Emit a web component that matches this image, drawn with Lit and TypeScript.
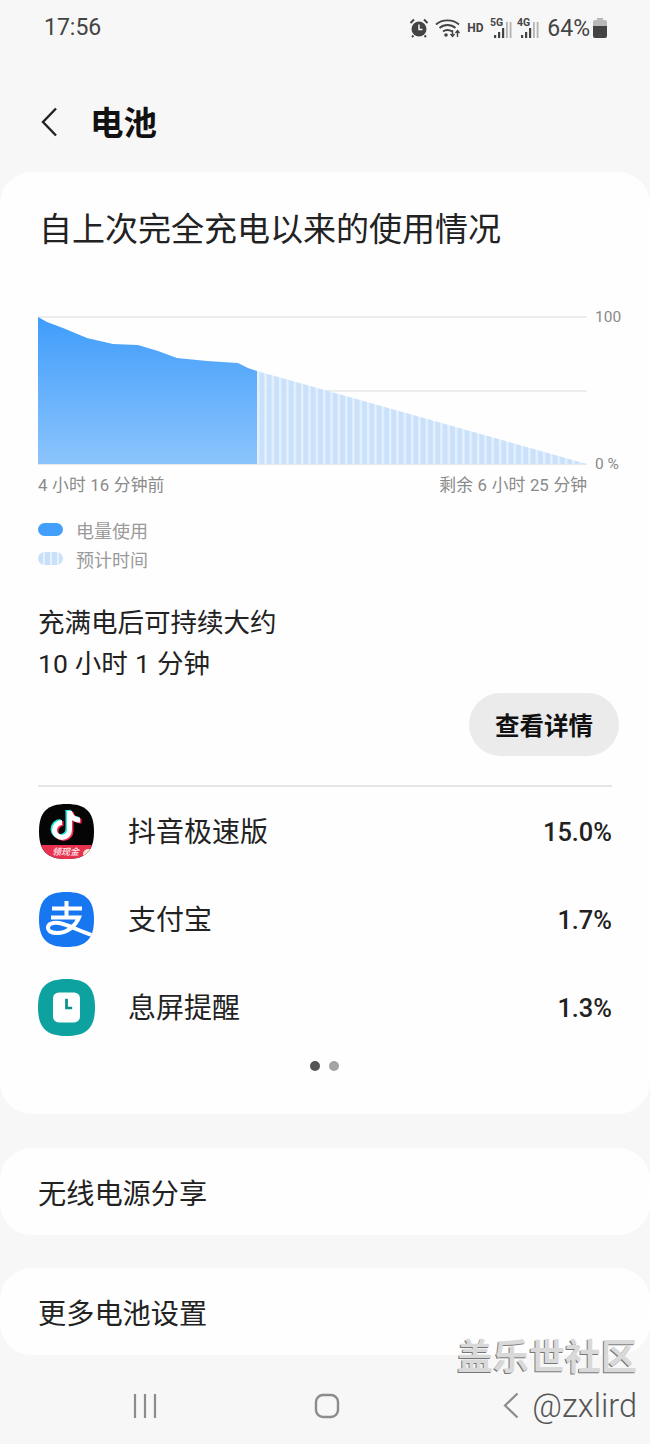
import { LitElement, css, html, svg } from 'lit'
import { customElement } from 'lit/decorators.js'

const usedLine =
  'M0 12 L9 17 L25 23 L49 33 L75 39 L100 40 L120 46 L139 53 L169 56 L200 58 L210 63 L219 66'

const signal = (label: string) => html`
  <svg class="signal" width="22" height="24" viewBox="0 0 22 24">
    <text x="0" y="9.5" font-family="Roboto" font-size="10.5" font-weight="700" fill="#444">${label}</text>
    <rect x="4" y="19" width="2.2" height="3" fill="#444" />
    <rect x="8" y="16" width="2.2" height="6" fill="#444" />
    <rect x="12" y="12" width="2.2" height="10" fill="#444" />
    <rect x="16" y="6" width="1.8" height="16" fill="#b4b4b4" />
    <rect x="19.7" y="6" width="1.8" height="16" fill="#b4b4b4" />
  </svg>
`

const apps = [
  { name: '抖音极速版', value: '15.0%', icon: 'douyin' },
  { name: '支付宝', value: '1.7%', icon: 'alipay' },
  { name: '息屏提醒', value: '1.3%', icon: 'clock' },
]

const squircle = 'M27.5 0 C47 0 55 8 55 27.5 C55 47 47 55 27.5 55 C8 55 0 47 0 27.5 C0 8 8 0 27.5 0 Z'

const icons: Record<string, unknown> = {
  douyin: html`<svg width="55" height="55" viewBox="0 0 55 55">
    <defs><clipPath id="dy"><path d=${squircle} /></clipPath></defs>
    <g clip-path="url(#dy)">
      <rect width="55" height="55" fill="#050505" />
      <rect y="41" width="55" height="14" fill="#e8304f" />
      <text x="13" y="51" font-family="Noto Sans CJK SC" font-size="9" font-weight="700" font-style="italic" fill="#fbd9de">领现金</text>
      <circle cx="49" cy="50" r="5" fill="#f6e2cf" />
      ${svg`<g fill="none" stroke-width="5">
        <path d="M30.5 7 V26 A7.5 7.5 0 1 1 23 18.5" stroke="#25e8e2" transform="translate(-1.5 -1)" />
        <path d="M30.5 7 C31 12 35 16 41 16" stroke="#25e8e2" transform="translate(-1.5 -1)" />
        <path d="M30.5 7 V26 A7.5 7.5 0 1 1 23 18.5" stroke="#fd2c55" transform="translate(1.5 1)" />
        <path d="M30.5 7 C31 12 35 16 41 16" stroke="#fd2c55" transform="translate(1.5 1)" />
        <path d="M30.5 7 V26 A7.5 7.5 0 1 1 23 18.5" stroke="#fff" />
        <path d="M30.5 7 C31 12 35 16 41 16" stroke="#fff" />
      </g>`}
    </g>
  </svg>`,
  alipay: html`<svg width="55" height="55" viewBox="0 0 55 55">
    <defs><clipPath id="ap"><path d=${squircle} /></clipPath></defs>
    <g clip-path="url(#ap)">
      <rect width="55" height="55" fill="#1677f0" />
      <g fill="none" stroke="#fff" stroke-width="4">
        <path d="M13 16.5 H43" />
        <path d="M27.5 9 V26" />
        <path d="M12 25.5 H40 C37 33 29 41 18 41 C11 41 8.5 38 9 35 C10 30.5 17 30 24 32 C34 35 45 41 56 44" />
      </g>
    </g>
  </svg>`,
  clock: html`<svg width="57" height="57" viewBox="0 0 55 55">
    <path d=${squircle} fill="#0da19f" />
    <rect x="14.5" y="13" width="26" height="29" rx="5.5" fill="#fff" />
    <path d="M27.5 19 V28 H33" fill="none" stroke="#0a8f8c" stroke-width="2.6" />
  </svg>`,
}

@customElement('app-root')
export class AppRoot extends LitElement {
  static styles = css`
    :host {
      display: block;
      position: relative;
      width: 650px;
      height: 1444px;
      overflow: hidden;
      background: #f7f7f7;
      color: #111;
      font-family: Roboto, 'Noto Sans CJK SC', sans-serif;
    }

    .status {
      height: 56px;
      display: flex;
      align-items: center;
      padding: 0 43px 0 44px;
      color: #444;
    }

    .time {
      font-size: 23px;
      line-height: 56px;
      flex: 1;
    }

    .status-icons {
      display: flex;
      align-items: center;
    }

    .alarm {
      margin-right: 6px;
    }

    .hd {
      font-size: 12px;
      font-weight: 700;
      width: 17px;
      margin: 0 6px;
    }

    .signal {
      margin-right: 5px;
    }

    .pct {
      font-size: 23px;
      margin: 0 3px 0 3px;
    }

    .header {
      height: 116px;
      box-sizing: border-box;
      padding: 48px 0 0 38px;
      display: flex;
      align-items: flex-start;
    }

    .back {
      margin: 3px 33px 0 3px;
    }

    .header h1 {
      margin: 0;
      font-size: 33.5px;
      font-weight: 700;
      line-height: 40px;
    }

    .card {
      background: #fefefe;
      border-radius: 32px;
    }

    .usage {
      height: 942px;
      box-sizing: border-box;
      padding: 38px 31px 0 38px;
    }

    .usage h2 {
      margin: 0 0 55px 1px;
      font-size: 33px;
      font-weight: 400;
      line-height: 40px;
      color: #222;
    }

    .chart {
      display: block;
      overflow: visible;
    }

    .axis {
      display: flex;
      justify-content: space-between;
      width: 549px;
      padding-top: 1px;
      font-size: 16.8px;
      word-spacing: 0.5px;
      line-height: 20px;
      color: #8a8a8a;
    }

    .legend {
      margin-top: 20px;
    }

    .legend-row {
      display: flex;
      align-items: center;
      height: 29px;
      font-size: 18px;
      color: #9a9a9a;
    }

    .swatch {
      width: 25px;
      height: 13px;
      border-radius: 7px;
      margin-right: 13px;
      background: #429ffb;
    }

    .swatch.est {
      background: repeating-linear-gradient(90deg, #c8e0fa 0 5px, #e6f1fd 5px 7px);
    }

    .duration {
      margin: 29px 0 0;
      font-size: 26.5px;
      line-height: 41px;
      word-spacing: 0.5px;
      color: #222;
    }

    .details {
      display: block;
      margin: 9px 0 0 auto;
      width: 150px;
      height: 63px;
      border: none;
      border-radius: 32px;
      background: #ebebeb;
      color: #111;
      font: 700 24.5px Roboto, 'Noto Sans CJK SC', sans-serif;
    }

    .divider {
      margin-top: 29px;
      width: 574px;
      height: 2px;
      background: #e6e6e6;
    }

    .app-row {
      display: flex;
      align-items: center;
      width: 574px;
      height: 88px;
    }

    .app-icon {
      width: 57px;
      margin-right: 33px;
      display: flex;
      justify-content: center;
    }

    .app-name {
      flex: 1;
      padding-top: 4px;
      font-size: 28px;
      line-height: 40px;
      color: #222;
    }

    .app-value {
      padding-top: 1px;
      font-size: 25.4px;
      font-weight: 500;
      color: #222;
    }

    .dots {
      display: flex;
      justify-content: center;
      gap: 9px;
      width: 574px;
      margin: 10px 0 0 0;
      padding-right: 2px;
      box-sizing: border-box;
    }

    .dots i {
      width: 10px;
      height: 10px;
      border-radius: 50%;
      background: #a3a3a3;
    }

    .dots i:first-child {
      background: #555;
    }

    .link {
      height: 87px;
      box-sizing: border-box;
      padding: 0 38px;
      display: flex;
      align-items: center;
      font-size: 28.2px;
      color: #222;
    }

    .share {
      margin-top: 34px;
    }

    .more {
      margin-top: 33px;
    }

    .nav {
      display: flex;
      align-items: center;
      padding: 37px 0 0 133px;
    }

    .nav .recent {
      margin-right: 157px;
    }

    .nav .home {
      margin-right: 163px;
    }

    .mark {
      position: absolute;
      right: 13px;
      top: 1336px;
      font-size: 36px;
      line-height: 44px;
      font-weight: 700;
      color: #d9d9d9;
      text-shadow: -1px 1px 0 #777;
    }

    .handle {
      position: absolute;
      right: 13px;
      top: 1387px;
      font-size: 32.5px;
      line-height: 38px;
      font-weight: 300;
      color: #555;
    }
  `

  render() {
    return html`
      <div class="status">
        <div class="time">17:56</div>
        <div class="status-icons">
          <svg class="alarm" width="20" height="20" viewBox="0 0 20 20">
            <circle cx="10" cy="11" r="7.5" fill="#444" />
            <path d="M1.5 5 L5 1.5 M18.5 5 L15 1.5 M4.5 17.5 L3 19 M15.5 17.5 L17 19" stroke="#444" stroke-width="2" fill="none" />
            <path d="M10 6.5 V11.5 H13.5" stroke="#f7f7f7" stroke-width="1.5" fill="none" />
          </svg>
          <svg width="26" height="20" viewBox="0 0 26 20">
            <g fill="none" stroke="#444" stroke-width="1.8">
              <path d="M1 6.5 C7 1 18 1 24 6.5" />
              <path d="M4.5 10 C9 6 16 6 20.5 10" />
              <path d="M8 13.5 C10.5 11.5 14.5 11.5 17 13.5" />
            </g>
            <circle cx="11" cy="17" r="1.8" fill="#444" />
            <path d="M17.5 12 V18 M15.5 16 L17.5 18.5 L19.5 16 M22.5 19 V13 M20.5 15 L22.5 12.5 L24.5 15" stroke="#444" stroke-width="1.4" fill="none" />
          </svg>
          <span class="hd">HD</span>
          ${signal('5G')} ${signal('4G')}
          <span class="pct">64%</span>
          <svg width="14" height="20" viewBox="0 0 14 20">
            <path d="M4 0 H10 V2 H12 Q14 2 14 4 V8 H0 V4 Q0 2 2 2 H4 Z" fill="#b9b9b9" />
            <path d="M0 8 H14 V18 Q14 20 12 20 H2 Q0 20 0 18 Z" fill="#444" />
          </svg>
        </div>
      </div>

      <div class="header">
        <svg class="back" width="16" height="30" viewBox="0 0 16 30">
          <path d="M15 1.5 L2 15 L15 28.5" fill="none" stroke="#222" stroke-width="2.4" />
        </svg>
        <h1>电池</h1>
      </div>

      <section class="card usage">
        <h2>自上次完全充电以来的使用情况</h2>
        ${this.renderChart()}
        <div class="axis"><span>4 小时 16 分钟前</span><span>剩余 6 小时 25 分钟</span></div>
        <div class="legend">
          <div class="legend-row"><span class="swatch"></span>电量使用</div>
          <div class="legend-row"><span class="swatch est"></span>预计时间</div>
        </div>
        <p class="duration">充满电后可持续大约<br />10 小时 1 分钟</p>
        <button class="details">查看详情</button>
        <div class="divider"></div>
        ${apps.map(
          (app) => html`
            <div class="app-row">
              <span class="app-icon">${icons[app.icon]}</span>
              <span class="app-name">${app.name}</span>
              <span class="app-value">${app.value}</span>
            </div>
          `,
        )}
        <div class="dots"><i></i><i></i></div>
      </section>

      <div class="card link share">无线电源分享</div>
      <div class="card link more">更多电池设置</div>

      <div class="nav">
        <svg class="recent" width="24" height="24" viewBox="0 0 24 24">
          <path d="M2 0 V24 M12 0 V24 M22 0 V24" stroke="#8c8c8c" stroke-width="2.2" fill="none" />
        </svg>
        <svg class="home" width="26" height="26" viewBox="0 0 26 26">
          <rect x="2" y="2" width="22" height="22" rx="7" fill="none" stroke="#8c8c8c" stroke-width="2.4" />
        </svg>
        <svg width="16" height="27" viewBox="0 0 16 27">
          <path d="M14.5 1.5 L2 13.5 L14.5 25.5" fill="none" stroke="#8c8c8c" stroke-width="2.2" />
        </svg>
      </div>

      <div class="mark">盖乐世社区</div>
      <div class="handle">@zxlird</div>
    `
  }

  private renderChart() {
    return html`
      <svg class="chart" width="581" height="169" viewBox="0 0 581 169">
        <defs>
          <linearGradient id="used" x1="0" y1="0" x2="0" y2="1">
            <stop offset="0" stop-color="#3f9dfb" />
            <stop offset="1" stop-color="#8cc4fd" />
          </linearGradient>
          <pattern id="bars" x="219" y="0" width="7.33" height="10" patternUnits="userSpaceOnUse">
            <rect width="7.33" height="10" fill="#c5dffb" />
            <rect width="2.4" height="10" fill="#e3effc" />
          </pattern>
        </defs>
        <path d="M0 12 H549 M0 86 H549" stroke="#e8e8e8" stroke-width="1.5" />
        <path d="M0 159.5 H549" stroke="#e8e8e8" stroke-width="1" />
        <path d="${usedLine} V159 H0 Z" fill="url(#used)" />
        <path d="M219 66 L549 159 H219 Z" fill="url(#bars)" fill-opacity="0.92" />
        <text x="557" y="17" font-family="Roboto" font-size="15.5" fill="#8a8a8a">100</text>
        <text x="557" y="164" font-family="Roboto" font-size="15.5" fill="#8a8a8a">0 %</text>
      </svg>
    `
  }
}
